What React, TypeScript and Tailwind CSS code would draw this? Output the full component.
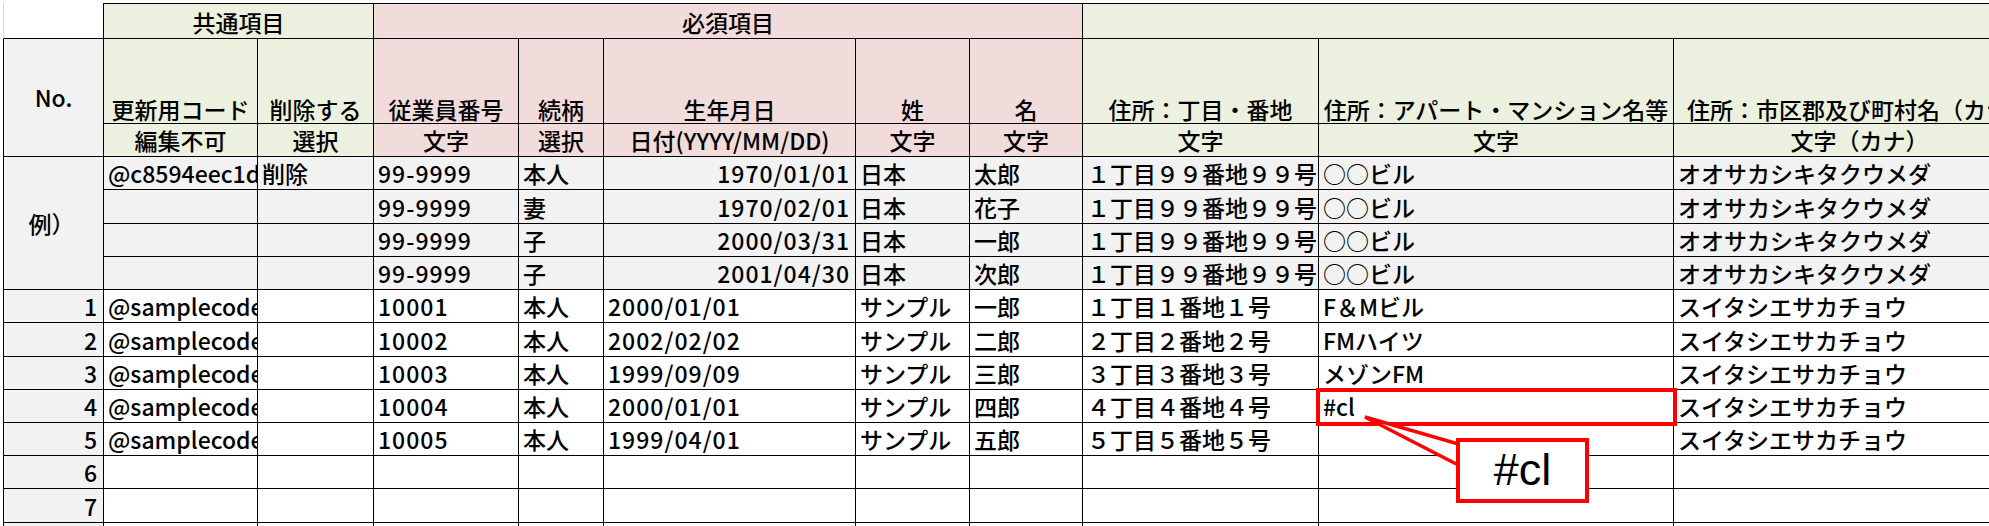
import React from "react";

type Row = string[];

const FILL_GREEN = "bg-[#ebf1de]";
const FILL_PINK = "bg-[#f2dcdb]";
const FILL_GRAY = "bg-[#f2f2f2]";

const headNames = [
  "更新用コード",
  "削除する",
  "従業員番号",
  "続柄",
  "生年月日",
  "姓",
  "名",
  "住所：丁目・番地",
  "住所：アパート・マンション名等",
  "住所：市区郡及び町村名（カナ）",
];

const headTypes = [
  "編集不可",
  "選択",
  "文字",
  "選択",
  "日付(YYYY/MM/DD)",
  "文字",
  "文字",
  "文字",
  "文字",
  "文字（カナ）",
];

// 例）の4行
const exampleRows: Row[] = [
  ["@c8594eec1d4e2a", "削除", "99-9999", "本人", "1970/01/01", "日本", "太郎", "１丁目９９番地９９号", "○○ビル", "オオサカシキタクウメダ"],
  ["", "", "99-9999", "妻", "1970/02/01", "日本", "花子", "１丁目９９番地９９号", "○○ビル", "オオサカシキタクウメダ"],
  ["", "", "99-9999", "子", "2000/03/31", "日本", "一郎", "１丁目９９番地９９号", "○○ビル", "オオサカシキタクウメダ"],
  ["", "", "99-9999", "子", "2001/04/30", "日本", "次郎", "１丁目９９番地９９号", "○○ビル", "オオサカシキタクウメダ"],
];

const dataRows: Row[] = [
  ["@samplecode1", "", "10001", "本人", "2000/01/01", "サンプル", "一郎", "１丁目１番地１号", "F＆Mビル", "スイタシエサカチョウ"],
  ["@samplecode1", "", "10002", "本人", "2002/02/02", "サンプル", "二郎", "２丁目２番地２号", "FMハイツ", "スイタシエサカチョウ"],
  ["@samplecode1", "", "10003", "本人", "1999/09/09", "サンプル", "三郎", "３丁目３番地３号", "メゾンFM", "スイタシエサカチョウ"],
  ["@samplecode1", "", "10004", "本人", "2000/01/01", "サンプル", "四郎", "４丁目４番地４号", "#cl", "スイタシエサカチョウ"],
  ["@samplecode1", "", "10005", "本人", "1999/04/01", "サンプル", "五郎", "５丁目５番地５号", "", "スイタシエサカチョウ"],
  ["", "", "", "", "", "", "", "", "", ""],
  ["", "", "", "", "", "", "", "", "", ""],
  ["", "", "", "", "", "", "", "", "", ""],
];

const base = "flex whitespace-nowrap border-r border-b border-black";

// 半角数字の列だけ少し字間を広げる
const tracking = (i: number) => (i === 2 || i === 4 ? "tracking-[1px]" : "");

const headFill = (i: number) => (i < 2 ? FILL_GREEN : i < 7 ? FILL_PINK : FILL_GREEN);

function DataCell({ text, col, fill, right }: { text: string; col: number; fill: string; right?: boolean }) {
  // 更新用コードは隣のセルにはみ出さないように切る
  const clip = col === 0 ? "overflow-hidden" : "";
  return (
    <div
      className={`${base} ${fill} ${clip} items-end pb-[4px] leading-[23px] ${
        right ? "justify-end pr-[5px]" : "justify-start pl-[4px]"
      } ${tracking(col)}`}
    >
      {text}
    </div>
  );
}

export default function App() {
  return (
    <div className="relative w-[1989px] h-[526px] overflow-hidden bg-white text-black font-['Noto_Sans_CJK_JP',sans-serif] font-medium text-[23px]">
      <div className="pt-[3px] pl-[3px]">
        <div className="grid w-max grid-cols-[101px_154px_116px_145px_85px_252px_114px_113px_236px_355px_372px] grid-rows-[36px_85px_33px_33px_34px_33px_33px_33px_34px_33px_33px_33px_33px_34px_33px]">
          {/* 1行目 */}
          <div className="border-r border-b border-black border-l-[#d9d9d9] border-l bg-white" />
          <div className={`${base} ${FILL_GREEN} col-span-2 border-t items-center justify-center pt-[3px]`}>共通項目</div>
          <div className={`${base} ${FILL_PINK} col-span-5 border-t items-center justify-center pt-[3px]`}>必須項目</div>
          <div className={`${base} ${FILL_GREEN} col-span-3 border-t`} />

          {/* 2行目：項目名 */}
          <div className={`${base} ${FILL_GRAY} row-span-2 border-l items-center justify-center`}>No.</div>
          {headNames.map((name, i) => (
            <div
              key={name}
              className={`${base} ${headFill(i)} items-end justify-center pb-[2px] leading-[23px]`}
            >
              {name}
            </div>
          ))}

          {/* 3行目：型 */}
          {headTypes.map((t, i) => (
            <div key={t + i} className={`${base} ${headFill(i)} items-center justify-center pt-[1px]`}>
              {t}
            </div>
          ))}

          {/* 例）行 */}
          <div className={`${base} ${FILL_GRAY} row-span-4 border-l items-center justify-center pr-[4px]`}>例）</div>
          {exampleRows.map((row, r) =>
            row.map((v, c) => (
              <DataCell key={`e${r}-${c}`} text={v} col={c} fill={FILL_GRAY} right={c === 4} />
            ))
          )}

          {/* データ行 */}
          {dataRows.map((row, r) => (
            <React.Fragment key={`d${r}`}>
              <div
                className={`${base} ${FILL_GRAY} border-l items-end justify-end pr-[6px] pb-[4px] leading-[23px]`}
              >
                {r + 1}
              </div>
              {row.map((v, c) => (
                <DataCell key={`d${r}-${c}`} text={v} col={c} fill="bg-white" />
              ))}
            </React.Fragment>
          ))}
        </div>
      </div>

      {/* 赤枠と吹き出し */}
      <div className="absolute left-[1316px] top-[388px] w-[361px] h-[38px] border-4 border-[#ff0000]" />
      <svg className="absolute left-0 top-0 pointer-events-none" width="1989" height="526">
        <polygon points="1365,417 1462,445 1462,467" fill="#ffffff" stroke="#ff0000" strokeWidth="3.5" strokeLinejoin="miter" />
      </svg>
      <div className="absolute left-[1456px] top-[438px] w-[133px] h-[65px] border-4 border-[#ff0000] bg-white flex items-center justify-center font-['Liberation_Sans',Arial,sans-serif] font-normal text-[45px] leading-none pb-[2px]">
        #cl
      </div>
    </div>
  );
}
